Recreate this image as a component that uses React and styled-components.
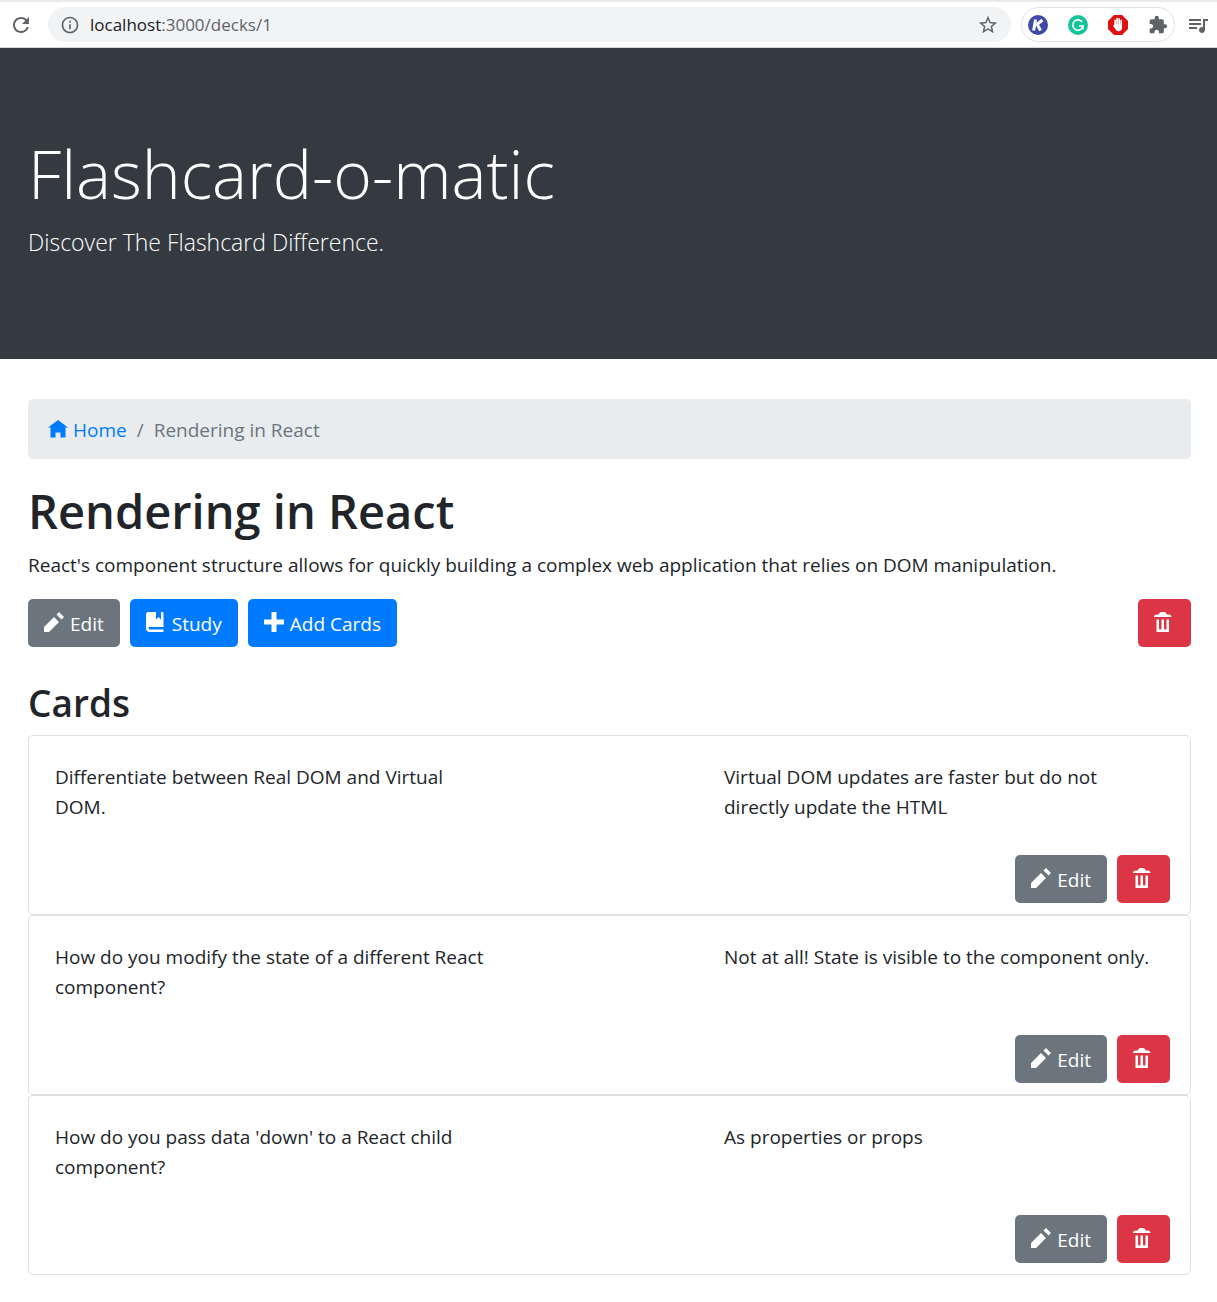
import React from "react";
import styled, { createGlobalStyle } from "styled-components";
import {
  MdRefresh,
  MdInfoOutline,
  MdStarBorder,
  MdExtension,
  MdQueueMusic,
} from "react-icons/md";

const GlobalStyle = createGlobalStyle`
  *, *::before, *::after { box-sizing: border-box; }
  body {
    margin: 0;
    background: #fff;
    color: #212529;
    font-family: "Open Sans", "Noto Sans", sans-serif;
    font-size: 19px;
    line-height: 30px;
  }
`;

const Toolbar = styled.div`
  display: flex;
  align-items: center;
  height: 48px;
  padding: 2px 7px 0 9px;
  border-bottom: 1px solid #d5d7da;
  box-shadow: inset 0 2px #e9eaec;
  color: #5f6368;
`;

const IconButton = styled.button`
  display: flex;
  padding: 0;
  border: 0;
  background: none;
  color: inherit;
  cursor: pointer;
`;

const AddressBar = styled.div`
  display: flex;
  flex: 1;
  align-items: center;
  gap: 10px;
  height: 35px;
  margin: 0 10px 0 15px;
  padding: 0 12px;
  border-radius: 18px;
  background: #f1f3f4;
`;

const Address = styled.span`
  flex: 1;
  font-size: 17px;
  line-height: 24px;
`;

const Host = styled.span`
  color: #202124;
`;

const Extensions = styled.div`
  display: flex;
  align-items: center;
  gap: 20px;
  height: 35px;
  margin-right: 11px;
  padding: 0 6px;
  border: 1px solid #dfe1e5;
  border-radius: 18px;
`;

const Hero = styled.header`
  padding: 83px 28px 98px;
  background: #343a40;
  color: #fff;
`;

const HeroTitle = styled.h1`
  margin: 0 0 8px;
  font-size: 66px;
  font-weight: 300;
  line-height: 84px;
`;

const Lead = styled.p`
  margin: 0;
  font-size: 23px;
  font-weight: 300;
  line-height: 38px;
`;

const Main = styled.main`
  padding: 40px 26px 27px 28px;
`;

const Breadcrumb = styled.nav`
  display: flex;
  gap: 10px;
  margin-bottom: 22px;
  padding: 16px 20px 14px;
  border-radius: 5px;
  background: #e9ecef;
  color: #6c757d;
`;

const HomeLink = styled.a`
  display: flex;
  align-items: center;
  gap: 5px;
  color: #007bff;
  text-decoration: none;
`;

const DeckTitle = styled.h2`
  margin: 0 0 9px;
  font-size: 47px;
  font-weight: 600;
  line-height: 60px;
`;

const Description = styled.p`
  margin: 0 0 19px;
`;

const Actions = styled.div`
  display: flex;
  gap: 10px;
  justify-content: ${(p) => (p.$end ? "flex-end" : "flex-start")};
`;

const Glyph = styled.svg`
  width: 20px;
  height: 20px;
  flex: none;
  fill: currentColor;
`;

const tones = { gray: "#6c757d", blue: "#007bff", red: "#dc3545" };

const Button = styled.button`
  display: flex;
  align-items: center;
  gap: 5px;
  height: 48px;
  margin-left: ${(p) => (p.$push ? "auto" : "0")};
  padding: 2px 16px 0;
  border: 0;
  border-radius: 5px;
  background: ${(p) => tones[p.$tone]};
  color: #fff;
  font: inherit;
  cursor: pointer;

  ${Glyph} {
    width: 21px;
    margin-bottom: 4px;
  }
`;

const CardsTitle = styled.h3`
  margin: 32px 0 8px;
  font-size: 37px;
  font-weight: 600;
  line-height: 48px;
`;

const CardList = styled.ul`
  margin: 0;
  padding: 0;
  list-style: none;
`;

const Card = styled.li`
  padding: 26px 20px 11px 26px;
  border: 1px solid #dfdfdf;
  border-radius: 5px;
`;

const Sides = styled.div`
  display: grid;
  grid-template-columns: 1fr 1fr;
  gap: 229px;
  min-height: 93px;
  padding-right: 6px;
`;

const Side = styled.p`
  margin: 0;
`;

const paths = {
  home: "M4 0l-4 3h1v4h2v-2h2v2h2v-4.03l1 .03-4-3z",
  pencil: "M6 0l-1 1 2 2 1-1-2-2zm-2 2l-4 4v2h2l4-4-2-2z",
  book: "M1 0c-.07 0-.13.01-.19.03-.39.08-.7.39-.78.78-.03.06-.03.12-.03.19v5.5c0 .83.67 1.5 1.5 1.5h5.5v-1h-5.5c-.28 0-.5-.22-.5-.5s.22-.5.5-.5h5.5v-5.5c0-.28-.22-.5-.5-.5h-.5v3l-1-1-1 1v-3h-3z",
  plus: "M3 0v3h-3v2h3v3h2v-3h3v-2h-3v-3h-2z",
  trash:
    "M3 0c-.55 0-1 .45-1 1h-1c-.55 0-1 .45-1 1h7c0-.55-.45-1-1-1h-1c0-.55-.45-1-1-1h-1zm-2 3v4.81c0 .11.08.19.19.19h4.63c.11 0 .19-.08.19-.19v-4.81h-1v3.5c0 .28-.22.5-.5.5s-.5-.22-.5-.5v-3.5h-1v3.5c0 .28-.22.5-.5.5s-.5-.22-.5-.5v-3.5h-1z",
};

const Icon = ({ name }) => (
  <Glyph viewBox="0 0 8 8" preserveAspectRatio="xMinYMid meet" aria-hidden="true">
    <path d={paths[name]} />
  </Glyph>
);

const KeyBadge = () => (
  <Glyph viewBox="0 0 20 20" aria-hidden="true">
    <circle cx="10" cy="10" r="10" fill="#3f4aa8" />
    <path
      d="M7.6 4.5L5.6 15.5M14.4 5L8 10.4M9.2 9.4L12.6 15.5"
      fill="none"
      stroke="#fff"
      strokeWidth="3"
    />
  </Glyph>
);

const GrammarBadge = () => (
  <Glyph viewBox="0 0 20 20" aria-hidden="true">
    <circle cx="10" cy="10" r="10" fill="#15c39a" />
    <path
      d="M14.2 7A5.2 5.2 0 1 0 14.8 12M11 11h4v3.4"
      fill="none"
      stroke="#fff"
      strokeWidth="1.6"
    />
  </Glyph>
);

const StopBadge = () => (
  <Glyph viewBox="0 0 20 20" aria-hidden="true">
    <path d="M6 0h8l6 6v8l-6 6H6l-6-6V6z" fill="#e01010" />
    <path
      d="M7.2 11V5.4M9.2 10V3.6M11.2 10V3.8M13.2 11V5.6"
      fill="none"
      stroke="#fff"
      strokeWidth="1.7"
      strokeLinecap="round"
    />
    <path
      d="M6.4 9.5H14v3.2c0 2.2-1.3 3.5-3.2 3.5-1.7 0-2.6-.7-3.3-2L5 10.8c.4-.8 1-.6 1.4-.2z"
      fill="#fff"
    />
  </Glyph>
);

const cards = [
  {
    front: "Differentiate between Real DOM and Virtual DOM.",
    back: "Virtual DOM updates are faster but do not directly update the HTML",
  },
  {
    front: "How do you modify the state of a different React component?",
    back: "Not at all! State is visible to the component only.",
  },
  {
    front: "How do you pass data 'down' to a React child component?",
    back: "As properties or props",
  },
];

export default function App() {
  return (
    <>
      <GlobalStyle />
      <Toolbar>
        <IconButton aria-label="Reload">
          <MdRefresh size={24} />
        </IconButton>
        <AddressBar>
          <MdInfoOutline size={20} />
          <Address>
            <Host>localhost</Host>:3000/decks/1
          </Address>
          <IconButton aria-label="Bookmark">
            <MdStarBorder size={22} />
          </IconButton>
        </AddressBar>
        <Extensions>
          <KeyBadge />
          <GrammarBadge />
          <StopBadge />
          <MdExtension size={20} />
        </Extensions>
        <IconButton aria-label="Media controls">
          <MdQueueMusic size={24} />
        </IconButton>
      </Toolbar>
      <Hero>
        <HeroTitle>Flashcard-o-matic</HeroTitle>
        <Lead>Discover The Flashcard Difference.</Lead>
      </Hero>
      <Main>
        <Breadcrumb aria-label="Breadcrumb">
          <HomeLink href="#">
            <Icon name="home" />
            Home
          </HomeLink>
          <span>/</span>
          <span>Rendering in React</span>
        </Breadcrumb>
        <DeckTitle>Rendering in React</DeckTitle>
        <Description>
          React's component structure allows for quickly building a complex web
          application that relies on DOM manipulation.
        </Description>
        <Actions>
          <Button $tone="gray">
            <Icon name="pencil" />
            Edit
          </Button>
          <Button $tone="blue">
            <Icon name="book" />
            Study
          </Button>
          <Button $tone="blue">
            <Icon name="plus" />
            Add Cards
          </Button>
          <Button $tone="red" $push aria-label="Delete deck">
            <Icon name="trash" />
          </Button>
        </Actions>
        <CardsTitle>Cards</CardsTitle>
        <CardList>
          {cards.map((card) => (
            <Card key={card.front}>
              <Sides>
                <Side>{card.front}</Side>
                <Side>{card.back}</Side>
              </Sides>
              <Actions $end>
                <Button $tone="gray">
                  <Icon name="pencil" />
                  Edit
                </Button>
                <Button $tone="red" aria-label="Delete card">
                  <Icon name="trash" />
                </Button>
              </Actions>
            </Card>
          ))}
        </CardList>
      </Main>
    </>
  );
}
